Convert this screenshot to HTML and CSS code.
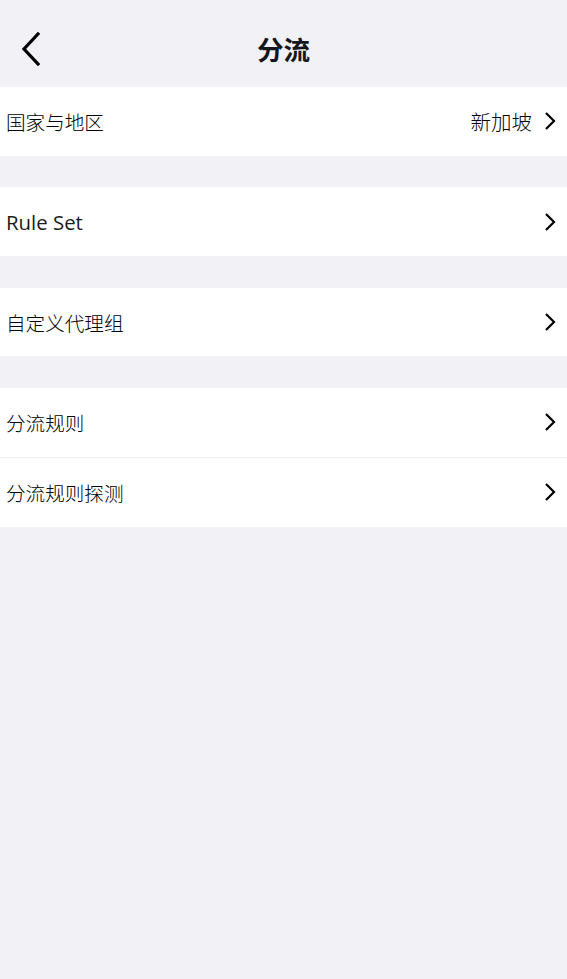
FILE: index.html
```html
<!DOCTYPE html>
<html lang="zh">
<head>
<meta charset="utf-8">
<title>分流</title>
<link rel="stylesheet" href="styles.css">
</head>
<body>
<div class="page">
  <header class="topbar">
    <button class="back" aria-label="返回">
      <svg width="22" height="34" viewBox="0 0 22 34"><path d="M18 2 L4 17 L18 32" fill="none" stroke="#000" stroke-width="3.2" stroke-linecap="square"/></svg>
    </button>
    <h1 class="title">分流</h1>
  </header>

  <section class="group">
    <div class="row"><span class="label">国家与地区</span><span class="right"><span class="value">新加坡</span><svg class="chev" width="12" height="20" viewBox="0 0 12 20"><path d="M2 2 L10 10 L2 18" fill="none" stroke="#000" stroke-width="2.2"/></svg></span></div>
  </section>

  <section class="group">
    <div class="row"><span class="label latin">Rule Set</span><span class="right"><svg class="chev" width="12" height="20" viewBox="0 0 12 20"><path d="M2 2 L10 10 L2 18" fill="none" stroke="#000" stroke-width="2.2"/></svg></span></div>
  </section>

  <section class="group">
    <div class="row"><span class="label">自定义代理组</span><span class="right"><svg class="chev" width="12" height="20" viewBox="0 0 12 20"><path d="M2 2 L10 10 L2 18" fill="none" stroke="#000" stroke-width="2.2"/></svg></span></div>
  </section>

  <section class="group">
    <div class="row"><span class="label">分流规则</span><span class="right"><svg class="chev" width="12" height="20" viewBox="0 0 12 20"><path d="M2 2 L10 10 L2 18" fill="none" stroke="#000" stroke-width="2.2"/></svg></span></div>
    <div class="row"><span class="label">分流规则探测</span><span class="right"><svg class="chev" width="12" height="20" viewBox="0 0 12 20"><path d="M2 2 L10 10 L2 18" fill="none" stroke="#000" stroke-width="2.2"/></svg></span></div>
  </section>
</div>
</body>
</html>
```

FILE: styles.css
```css
html, body {
  margin: 0;
  padding: 0;
  background: #f2f1f6;
}
body {
  font-family: "Open Sans", "Noto Sans CJK SC", sans-serif;
  color: #000;
}
.page {
  display: flex;
  flex-direction: column;
  gap: 31.7px;
  min-height: 979px;
}
.topbar {
  height: 87px;
  flex: none;
  display: flex;
  align-items: center;
  justify-content: center;
  position: relative;
  margin-bottom: -31.7px;
}
.back {
  position: absolute;
  left: 20px;
  top: 32px;
  padding: 0;
  border: 0;
  background: none;
  width: 22px;
  height: 34px;
  display: block;
}
.back svg { display: block; }
.title {
  margin: 0;
  font-family: "Noto Sans CJK SC", sans-serif;
  font-size: 26.5px;
  font-weight: 700;
  color: #15171a;
  padding-top: 10px;
}
.group {
  background: #fff;
  display: flex;
  flex-direction: column;
}
.row {
  height: 68.7px;
  box-sizing: border-box;
  display: flex;
  align-items: center;
  justify-content: space-between;
  padding: 0 11px 0 6px;
  font-size: 19.6px;
  font-family: "Noto Sans CJK SC", sans-serif;
  font-weight: 300;
  color: #000;
}
.row + .row {
  border-top: 1.5px solid #eeeef2;
  height: 70.2px;
}
.label.latin {
  font-family: "Open Sans", sans-serif;
  font-size: 20.4px;
  font-weight: 400;
  color: #1c1c1c;
}
.right {
  display: flex;
  align-items: center;
  gap: 12px;
}
.value {
  font-size: 20.5px;
}
.chev { display: block; }
```
